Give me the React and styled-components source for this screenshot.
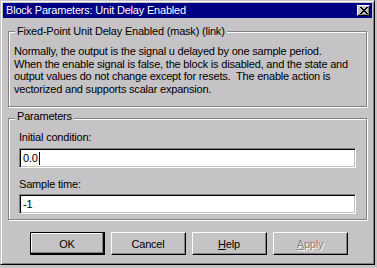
import React from "react";
import styled, { createGlobalStyle } from "styled-components";

const C = {
  face: "#c6c3c6",
  shadow: "#848284",
  dark: "#000000",
  light: "#ffffff",
  navy: "#000084",
};

const Global = createGlobalStyle`
  html, body { margin: 0; padding: 0; background: ${C.face}; }
  body {
    font-family: "Liberation Sans", Arial, sans-serif;
    font-size: 11px;
    letter-spacing: -0.2px;
  }
`;

const Page = styled.div`
  width: 377px;
  height: 268px;
  background: ${C.face};
  overflow: hidden;
`;

const Window = styled.div`
  box-sizing: border-box;
  width: 375px;
  height: 265px;
  padding: 2px;
  background: ${C.face};
  border: 1px solid;
  border-color: ${C.face} ${C.dark} ${C.dark} ${C.face};
  box-shadow: inset 1px 1px 0 ${C.light}, inset -1px -1px 0 ${C.shadow};
  display: flex;
  flex-direction: column;
`;

const TitleBar = styled.div`
  height: 15px;
  background: ${C.navy};
  display: flex;
  align-items: center;
  padding: 0 2px 0 3px;
`;

const TitleText = styled.span`
  flex: 1;
  color: ${C.light};
  font-size: 11px;
  line-height: 15px;
  white-space: nowrap;
`;

const CloseButton = styled.div`
  box-sizing: border-box;
  width: 13px;
  height: 11px;
  background: ${C.face};
  border: 1px solid;
  border-color: ${C.light} ${C.dark} ${C.dark} ${C.light};
  box-shadow: inset -1px -1px 0 ${C.shadow};
  display: flex;
  align-items: center;
  justify-content: center;
`;

const Content = styled.div`
  flex: 1;
  display: flex;
  flex-direction: column;
  padding: 0 5px 0 5px;
`;

const Group = styled.div`
  position: relative;
  box-sizing: border-box;
  height: ${(p) => p.$h}px;
  margin-top: ${(p) => p.$mt}px;
  border: 1px solid ${C.shadow};
  box-shadow: inset 1px 1px 0 ${C.light}, 1px 1px 0 ${C.light};
  padding: ${(p) => p.$pad};
`;

const Legend = styled.span`
  position: absolute;
  left: 6px;
  top: ${(p) => p.$top}px;
  padding: 0 2px;
  background: ${C.face};
  line-height: 13px;
  white-space: nowrap;
  color: #000;
`;

const Description = styled.div`
  white-space: pre;
  line-height: 12.7px;
  color: #000;
`;

const Label = styled.div`
  line-height: 13px;
  margin-top: ${(p) => p.$mt}px;
  color: #000;
`;

const Field = styled.div`
  box-sizing: border-box;
  height: 20px;
  margin-top: ${(p) => p.$mt}px;
  background: ${C.light};
  border: 1px solid;
  border-color: ${C.shadow} ${C.light} ${C.light} ${C.shadow};
  box-shadow: inset 1px 1px 0 ${C.dark}, inset -1px -1px 0 ${C.face};
  display: flex;
  align-items: center;
  padding-left: 3px;
  color: #000;
  line-height: 13px;
`;

const Caret = styled.span`
  display: inline-block;
  width: 1px;
  height: 13px;
  background: #000;
  margin-left: 1px;
`;

const ButtonRow = styled.div`
  display: flex;
  justify-content: center;
  gap: 6px;
  margin-top: 12px;
  padding-left: 2px;
`;

const Button = styled.div`
  box-sizing: border-box;
  width: 75px;
  height: 23px;
  background: ${C.face};
  display: flex;
  align-items: center;
  justify-content: center;
  color: ${(p) => (p.$disabled ? C.shadow : "#000")};
  text-shadow: ${(p) => (p.$disabled ? `1px 1px 0 ${C.light}` : "none")};
  border: 1px solid;
  border-color: ${(p) =>
    p.$default ? C.dark : `${C.light} ${C.dark} ${C.dark} ${C.light}`};
  box-shadow: ${(p) =>
    p.$default
      ? `inset -1px -1px 0 ${C.dark}, inset -2px -2px 0 ${C.shadow}, inset 1px 1px 0 ${C.light}`
      : `inset -1px -1px 0 ${C.shadow}`};
  line-height: 13px;
  padding-top: 1px;
`;

const Key = styled.span`
  text-decoration: underline;
  text-underline-offset: 1px;
`;

const description =
  "Normally, the output is the signal u delayed by one sample period.\n" +
  "When the enable signal is false, the block is disabled, and the state and\n" +
  "output values do not change except for resets.  The enable action is\n" +
  "vectorized and supports scalar expansion.";

export default function App() {
  return (
    <Page>
      <Global />
      <Window>
        <TitleBar>
          <TitleText>Block Parameters: Unit Delay Enabled</TitleText>
          <CloseButton>
            <svg width="8" height="7" viewBox="0 0 8 7" shapeRendering="crispEdges">
              <path
                d="M0 0h2v1h-2zM6 0h2v1h-2zM1 1h2v1h-2zM5 1h2v1h-2zM2 2h4v1h-4zM3 3h2v1h-2zM2 4h4v1h-4zM1 5h2v1h-2zM5 5h2v1h-2zM0 6h2v1h-2zM6 6h2v1h-2z"
                fill="#000"
              />
            </svg>
          </CloseButton>
        </TitleBar>
        <Content>
          <Group $h={76} $mt={13} $pad="13px 5px 0 5px">
            <Legend $top={-7}>Fixed-Point Unit Delay Enabled (mask) (link)</Legend>
            <Description>{description}</Description>
          </Group>
          <Group $h={102} $mt={11} $pad="12px 10px 0 10px">
            <Legend $top={-9}>Parameters</Legend>
            <Label $mt={0}>Initial condition:</Label>
            <Field $mt={4}>
              0.0<Caret />
            </Field>
            <Label $mt={10}>Sample time:</Label>
            <Field $mt={3}>-1</Field>
          </Group>
          <ButtonRow>
            <Button $default>OK</Button>
            <Button>Cancel</Button>
            <Button>
              <span>
                <Key>H</Key>elp
              </span>
            </Button>
            <Button $disabled>
              <span>
                <Key>A</Key>pply
              </span>
            </Button>
          </ButtonRow>
        </Content>
      </Window>
    </Page>
  );
}
